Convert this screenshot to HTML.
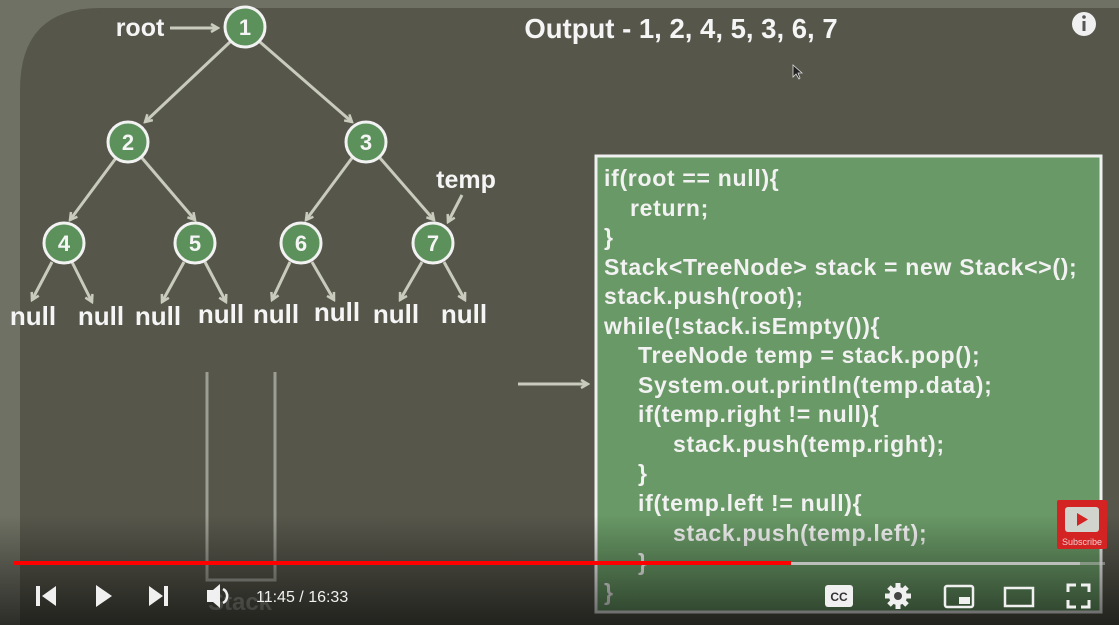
<!DOCTYPE html>
<html><head><meta charset="utf-8"><style>
html,body{margin:0;padding:0;width:1119px;height:625px;overflow:hidden;background:#6e7063}
svg{position:absolute;left:0;top:0}
text{font-family:"Liberation Sans",sans-serif;font-weight:bold}
</style></head><body>
<svg width="1119" height="625" viewBox="0 0 1119 625">
<defs>
<linearGradient id="bot" x1="0" y1="0" x2="0" y2="1">
<stop offset="0" stop-color="#000" stop-opacity="0"/>
<stop offset="1" stop-color="#000" stop-opacity="0.6"/>
</linearGradient>
<marker id="ah" markerWidth="10" markerHeight="10" refX="8" refY="5" orient="auto" markerUnits="userSpaceOnUse">
<path d="M1,1 L8,5 L1,9" fill="none" stroke="#c9cbbd" stroke-width="2.5"/>
</marker>
</defs>
<rect width="1119" height="625" fill="#6f7164"/>
<path d="M20,90 Q20,8 100,8 L1119,8 L1119,625 L20,625 Z" fill="#56564b"/>
<g stroke="#c9cbbd" stroke-width="3" fill="none" marker-end="url(#ah)">
<line x1="170" y1="28" x2="218" y2="28"/>
<line x1="230" y1="42" x2="145" y2="122"/>
<line x1="260" y1="42" x2="352" y2="122"/>
<line x1="116" y1="158" x2="70" y2="220"/>
<line x1="142" y1="158" x2="195" y2="220"/>
<line x1="352" y1="158" x2="306" y2="220"/>
<line x1="380" y1="158" x2="434" y2="220"/>
<line x1="462" y1="195" x2="448" y2="222"/>
<line x1="52" y1="262" x2="32" y2="300"/>
<line x1="72" y1="262" x2="92" y2="302"/>
<line x1="184" y1="262" x2="162" y2="302"/>
<line x1="205" y1="262" x2="226" y2="302"/>
<line x1="290" y1="262" x2="272" y2="300"/>
<line x1="312" y1="262" x2="334" y2="300"/>
<line x1="422" y1="262" x2="400" y2="300"/>
<line x1="444" y1="262" x2="465" y2="300"/>
<line x1="518" y1="384" x2="588" y2="384"/>
</g>
<g fill="#5c915c" stroke="#f2f2f2" stroke-width="3">
<circle cx="245" cy="27" r="20"/><circle cx="128" cy="142" r="20"/><circle cx="366" cy="142" r="20"/>
<circle cx="64" cy="243" r="20"/><circle cx="195" cy="243" r="20"/><circle cx="301" cy="243" r="20"/><circle cx="433" cy="243" r="20"/>
</g>
<g fill="#f5f5f5" font-size="22" text-anchor="middle">
<text x="245" y="35">1</text><text x="128" y="150">2</text><text x="366" y="150">3</text>
<text x="64" y="251">4</text><text x="195" y="251">5</text><text x="301" y="251">6</text><text x="433" y="251">7</text>
<text x="140" y="36" font-size="25">root</text>
<text x="466" y="188" font-size="25">temp</text>
<g font-size="26">
<text x="33" y="325">null</text><text x="101" y="325">null</text>
<text x="158" y="325">null</text><text x="221" y="323">null</text>
<text x="276" y="323">null</text><text x="337" y="321">null</text>
<text x="396" y="323">null</text><text x="464" y="323">null</text>
</g>
<text x="681" y="38" font-size="27.5">Output - 1, 2, 4, 5, 3, 6, 7</text>
</g>
<path d="M207,372 L207,580 L275,580 L275,372" fill="none" stroke="#9c9d93" stroke-width="3"/>
<text x="240" y="610" font-size="24" fill="#8a8b82" text-anchor="middle">Stack</text>
<rect x="596" y="156" width="505" height="456" fill="#699966" stroke="#f0f0f0" stroke-width="3"/>
<g fill="#f2f2f2" font-size="23" letter-spacing="0.7">
<text x="604" y="186">if(root == null){</text>
<text x="630" y="216">return;</text>
<text x="604" y="245">}</text>
<text x="604" y="275">Stack&lt;TreeNode&gt; stack = new Stack&lt;&gt;();</text>
<text x="604" y="304">stack.push(root);</text>
<text x="604" y="334">while(!stack.isEmpty()){</text>
<text x="638" y="363">TreeNode temp = stack.pop();</text>
<text x="638" y="393">System.out.println(temp.data);</text>
<text x="638" y="422">if(temp.right != null){</text>
<text x="673" y="452">stack.push(temp.right);</text>
<text x="638" y="481">}</text>
<text x="638" y="511">if(temp.left != null){</text>
<text x="673" y="541">stack.push(temp.left);</text>
<text x="638" y="570">}</text>
<text x="604" y="600">}</text>
</g>
<rect x="0" y="515" width="1119" height="110" fill="url(#bot)"/>
<rect x="14" y="562" width="1091" height="3" fill="#bdbdbd" opacity="0.5"/>
<rect x="790" y="562" width="290" height="3" fill="#c8c8c8" opacity="0.8"/>
<rect x="14" y="561" width="777" height="4" fill="#f00"/>
<g fill="#f0f0f0">
<rect x="36" y="586" width="4" height="20"/><path d="M56,586 L42,596 L56,606 Z"/>
<path d="M96,585 L112,596 L96,607 Z"/>
<path d="M149,586 L163,596 L149,606 Z"/><rect x="164" y="586" width="4" height="20"/>
<path d="M207,590 L213,590 L220,584 L220,608 L213,602 L207,602 Z"/>
<path d="M223,589 A8,8 0 0 1 223,603" fill="none" stroke="#f0f0f0" stroke-width="2.5"/>
<text x="256" y="602" font-size="16" style="font-weight:normal">11:45 / 16:33</text>
<rect x="825" y="585" width="28" height="22" rx="3"/>
<text x="839" y="601" font-size="12" fill="#333" text-anchor="middle">CC</text>
<circle cx="898" cy="596" r="9"/>
<g stroke="#f0f0f0" stroke-width="5"><line x1="898" y1="583" x2="898" y2="609"/><line x1="885" y1="596" x2="911" y2="596"/><line x1="889" y1="587" x2="907" y2="605"/><line x1="907" y1="587" x2="889" y2="605"/></g>
<circle cx="898" cy="596" r="4" fill="#444"/>
<rect x="945" y="586" width="28" height="21" rx="2" fill="none" stroke="#f0f0f0" stroke-width="2.5"/>
<rect x="959" y="597" width="11" height="7"/>
<rect x="1005" y="588" width="28" height="18" fill="none" stroke="#f0f0f0" stroke-width="2.5"/>
<path d="M1068,592 V585 H1076 M1081,585 H1089 V592 M1089,600 V607 H1081 M1076,607 H1068 V600" fill="none" stroke="#f0f0f0" stroke-width="3"/>
</g>
<rect x="1057" y="500" width="50" height="49" rx="2" fill="#d42323"/>
<rect x="1065" y="507" width="34" height="25" rx="3" fill="#d0d4cc"/>
<path d="M1077,513 L1088,519.5 L1077,526 Z" fill="#d42323"/>
<text x="1082" y="545" font-size="9" fill="#f0d0d0" text-anchor="middle" style="font-weight:normal">Subscribe</text>
<circle cx="1084" cy="24" r="12" fill="#f0f0f0"/>
<rect x="1082.5" y="21" width="3" height="10" fill="#555"/><circle cx="1084" cy="17" r="1.8" fill="#555"/>
<path d="M793,65 L793,77 L796,74 L799,79 L800,78 L798,73 L802,73 Z" fill="#222" stroke="#ddd" stroke-width="0.8"/>
</svg>
</body></html>
